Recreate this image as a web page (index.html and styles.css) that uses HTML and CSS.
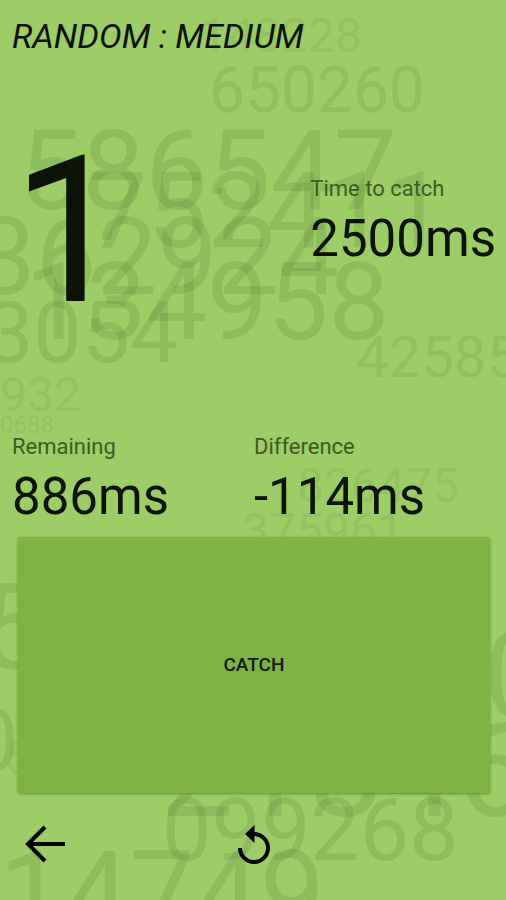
FILE: index.html
```html
<!DOCTYPE html>
<html lang="en">
<head>
<meta charset="utf-8">
<title>Random : Medium</title>
<link rel="stylesheet" href="styles.css">
</head>
<body>
<svg class="backdrop" aria-hidden="true">
  <text class="n48" x="200" y="52">148228</text>
  <text class="n64" x="209" y="112">650260</text>
  <text class="n112" x="19" y="209">586547</text>
  <text class="n106" x="88" y="247">752411</text>
  <text class="n108" x="-25" y="294">362924</text>
  <text class="n108" x="25" y="339">134958</text>
  <text class="n86" x="-15" y="362">3054</text>
  <text class="n58" x="356" y="377">425853</text>
  <text class="n48" x="0" y="411">932</text>
  <text class="n24" x="0" y="433">0688</text>
  <text class="n48" x="297" y="502">826475</text>
  <text class="n48" x="242" y="547">375961</text>
  <text class="n120" x="-20" y="669">5</text>
  <text class="n86" x="-30" y="770">0</text>
  <text class="n48" x="5" y="774">5</text>
  <text class="n120" x="484" y="717">0</text>
  <text class="n132" x="160" y="816">21846</text>
  <text class="n88" x="162" y="860">099268</text>
  <text class="n116" x="-1" y="934">14749</text>
</svg>
<main class="game">
  <h1 class="title">RANDOM : MEDIUM</h1>
  <section class="round">
    <p class="count">1</p>
    <div class="stat">
      <p class="label">Time to catch</p>
      <p class="value">2500ms</p>
    </div>
  </section>
  <section class="results">
    <div class="stat">
      <p class="label">Remaining</p>
      <p class="value">886ms</p>
    </div>
    <div class="stat">
      <p class="label">Difference</p>
      <p class="value">-114ms</p>
    </div>
  </section>
  <button class="catch" type="button">CATCH</button>
  <nav class="actions">
    <button class="icon" type="button" aria-label="Back">
      <svg width="42" height="42" viewBox="0 0 42 42"><path d="M41 21H5M21 4L4 21L21 38" fill="none" stroke="#000" stroke-width="4"/></svg>
    </button>
    <button class="icon" type="button" aria-label="Restart">
      <svg width="42" height="42" viewBox="0 0 42 42"><path d="M21 11A14 14 0 1 1 7 25" fill="none" stroke="#000" stroke-width="4"/><path d="M21.500 2V20L12 11Z"/></svg>
    </button>
  </nav>
</main>
</body>
</html>
```
FILE: styles.css
```css
* {
  box-sizing: border-box;
}

body {
  margin: 0;
  background: #9ccd67;
  color: #0b1206;
  font-family: Roboto, sans-serif;
}

.backdrop {
  position: absolute;
  inset: 0;
  width: 100%;
  height: 100%;
  fill: rgba(85, 120, 50, 0.2);
}

.n24 { font-size: 24px; opacity: 0.6; }
.n48 { font-size: 48px; opacity: 0.6; }
.n58 { font-size: 58px; opacity: 0.7; }
.n64 { font-size: 64px; opacity: 0.8; }
.n86 { font-size: 86px; }
.n88 { font-size: 88px; }
.n106 { font-size: 106px; }
.n108 { font-size: 108px; }
.n112 { font-size: 112px; }
.n116 { font-size: 116px; }
.n120 { font-size: 120px; }
.n132 { font-size: 132px; }

.game {
  position: relative;
  display: flex;
  flex-direction: column;
  min-height: 100vh;
  padding: 12px 10px 12px 12px;
}

h1,
p {
  margin: 0;
  font-weight: 400;
}

.title {
  font-size: 34px;
  font-style: italic;
  line-height: 48px;
}

.round {
  display: flex;
  align-items: flex-start;
  justify-content: space-between;
  padding-top: 52px;
}

.count {
  font-size: 204px;
  line-height: 240px;
}

.round .stat {
  padding-top: 63px;
}

.label {
  color: #3f5a26;
  font-size: 22px;
  line-height: 28px;
}

.value {
  font-size: 51px;
  line-height: 72px;
}

.results {
  display: grid;
  grid-template-columns: 1fr 1fr;
  padding-top: 81px;
}

.catch {
  flex: 1;
  margin: 4px 6px 0;
  padding: 0 0 2px;
  border: 0;
  border-radius: 3px;
  background: #7db343;
  box-shadow: 0 1px 3px rgba(50, 80, 20, 0.5);
  color: #10190a;
  font: 500 19px Roboto, sans-serif;
}

.actions {
  display: grid;
  grid-template-columns: 1fr auto 1fr;
  padding: 30px 12px 23px;
}

.icon {
  display: flex;
  width: 42px;
  padding: 0;
  border: 0;
  background: none;
}
```
